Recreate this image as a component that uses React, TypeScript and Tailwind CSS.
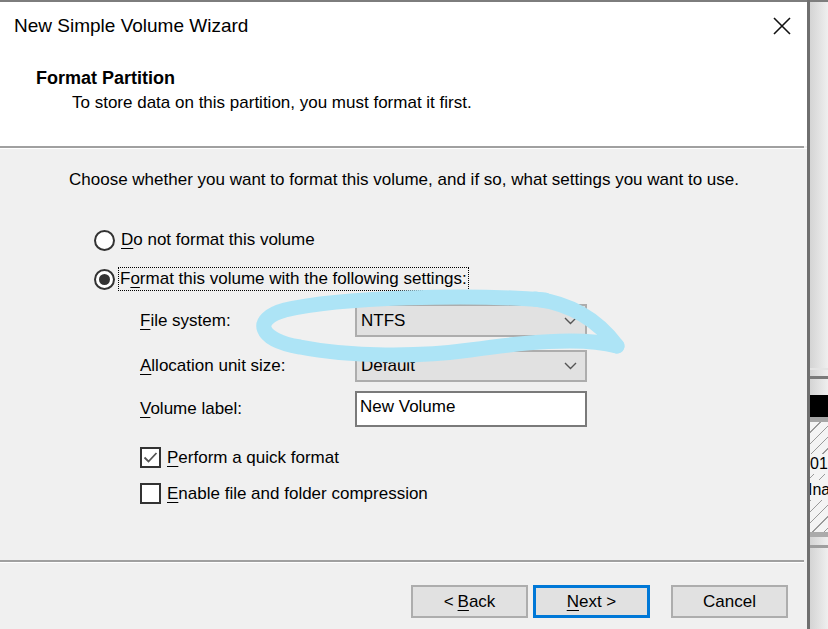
import React from 'react';

const font = { fontFamily: '"Liberation Sans", Arial, sans-serif' };

function Key({ children }: { children: string }) {
  return <span className="underline decoration-1 underline-offset-[3px]">{children}</span>;
}

function Radio({ checked }: { checked?: boolean }) {
  return (
    <span className="flex h-[21px] w-[21px] shrink-0 items-center justify-center rounded-full border-2 border-[#333] bg-white">
      {checked && <span className="h-[11px] w-[11px] rounded-full bg-[#333]" />}
    </span>
  );
}

function Checkbox({ checked }: { checked?: boolean }) {
  return (
    <span className="flex h-[21px] w-[21px] shrink-0 items-center justify-center border-2 border-[#333] bg-white">
      {checked && (
        <svg width="15" height="15" viewBox="0 0 15 15">
          <path d="M1.5 7.5 L5.5 11.5 L13.5 3" fill="none" stroke="#555" strokeWidth="1.8" />
        </svg>
      )}
    </span>
  );
}

function Combo({ value }: { value: string }) {
  return (
    <div className="flex h-full w-[232px] items-center justify-between border-2 border-[#adadad] bg-[#e1e1e1] pl-[4px] pr-[8px]">
      <span>{value}</span>
      <svg width="13" height="8" viewBox="0 0 13 8">
        <path d="M1 1 L6.5 6.5 L12 1" fill="none" stroke="#555" strokeWidth="1.4" />
      </svg>
    </div>
  );
}

function Button({ children, primary }: { children: React.ReactNode; primary?: boolean }) {
  return (
    <div
      className={
        primary
          ? 'flex h-[33px] w-[117px] items-center justify-center border-[3px] border-[#0078d7] bg-[#e1e1e1]'
          : 'flex h-[33px] w-[117px] items-center justify-center border-2 border-[#adadad] bg-[#e1e1e1]'
      }
    >
      {children}
    </div>
  );
}

function Dialog() {
  return (
    <div className="relative flex h-[629px] w-[807px] shrink-0 flex-col text-[17px] text-black">
      {/* header */}
      <div className="flex h-[146px] flex-col border-t-2 border-[#7d7d7d] bg-white">
        <div className="flex items-center justify-between pl-[14px] pr-[16px] pt-[12px]">
          <span className="text-[19px] leading-[24px]">New Simple Volume Wizard</span>
          <svg width="18" height="18" viewBox="0 0 18 18">
            <path d="M1 1 L17 17 M17 1 L1 17" stroke="#111" strokeWidth="1.6" />
          </svg>
        </div>
        <div className="mt-[30px] pl-[36px] text-[18px] font-bold leading-[20px]">Format Partition</div>
        <div className="mt-[5px] pl-[72px] leading-[20px]">To store data on this partition, you must format it first.</div>
      </div>
      <div className="h-[2px] w-[804px] bg-[#a0a0a0]" />
      <div className="h-px bg-white" />

      {/* body */}
      <div className="flex flex-1 flex-col bg-[#f0f0f0]">
        <div className="mt-[21px] pl-[69px] leading-[20px]">
          Choose whether you want to format this volume, and if so, what settings you want to use.
        </div>

        <div className="mt-[38px] flex h-[24px] items-center gap-[6px] pl-[94px]">
          <Radio />
          <span>
            <Key>D</Key>o not format this volume
          </span>
        </div>
        <div className="mt-[15px] flex h-[24px] items-center gap-[3px] pl-[94px]">
          <Radio checked />
          <span className="border border-dotted border-black px-[1px] leading-[22px]">
            F<Key>o</Key>rmat this volume with the following settings:
          </span>
        </div>

        <div className="mt-[13px] flex h-[33px] items-center pl-[140px]">
          <span className="w-[215px]">
            <Key>F</Key>ile system:
          </span>
          <Combo value="NTFS" />
        </div>
        <div className="mt-[13px] flex h-[32px] items-center pl-[140px]">
          <span className="w-[215px]">
            <Key>A</Key>llocation unit size:
          </span>
          <Combo value="Default" />
        </div>
        <div className="mt-[9px] flex h-[36px] items-center pl-[140px]">
          <span className="w-[215px]">
            <Key>V</Key>olume label:
          </span>
          <div className="flex h-full w-[232px] items-center border-2 border-[#7a7a7a] bg-white pb-[4px] pl-[3px]">
            New Volume
          </div>
        </div>

        <div className="mt-[20px] flex h-[21px] items-center gap-[6px] pl-[140px]">
          <Checkbox checked />
          <span>
            <Key>P</Key>erform a quick format
          </span>
        </div>
        <div className="mt-[15px] flex h-[21px] items-center gap-[6px] pl-[140px]">
          <Checkbox />
          <span>
            <Key>E</Key>nable file and folder compression
          </span>
        </div>

        <div className="mt-[56px] h-[2px] w-[804px] bg-[#a0a0a0]" />
        <div className="h-px w-[804px] bg-white" />

        <div className="mt-[22px] flex pl-[411px]">
          <Button>
            &lt; <span className="ml-[4px]"><Key>B</Key>ack</span>
          </Button>
          <div className="ml-[5px]">
            <Button primary>
              <Key>N</Key>ext &gt;
            </Button>
          </div>
          <div className="ml-[21px]">
            <Button>Cancel</Button>
          </div>
        </div>
      </div>

      {/* highlighter scribble drawn over the dialog */}
      <svg className="pointer-events-none absolute left-0 top-0" width="807" height="629" viewBox="0 0 807 629">
        <path
          d="M545 300 C470 294 340 297 285 310 C252 319 258 340 300 347 C350 357 420 357 470 350 C520 343 580 336 617 346"
          fill="none"
          stroke="#ade4f6"
          strokeWidth="15"
          strokeLinecap="round"
          strokeLinejoin="round"
        />
        <path
          d="M535 299 C575 304 600 323 617 346"
          fill="none"
          stroke="#ade4f6"
          strokeWidth="15"
          strokeLinecap="round"
        />
      </svg>
    </div>
  );
}

function BackWindow() {
  return (
    <div className="flex h-[629px] flex-1 flex-col overflow-hidden border-l-[3px] border-[#6f6f6f] bg-[linear-gradient(90deg,#d4d4d4,#efefef)]">
      <div className="h-[2px] bg-[#7d7d7d]" />
      <div className="h-[366px]" />
      <div className="h-[2px] bg-[#e4e4e4]" />
      <div className="h-[6px]" />
      <div className="h-[3px] bg-[#7a7a7a]" />
      <div className="h-[16px]" />
      <div className="h-[22px] bg-black" />
      <div className="h-[5px] bg-[#a6a6a6]" />
      <div className="relative h-[110px] bg-[repeating-linear-gradient(135deg,#f4f4f4_0px,#f4f4f4_7px,#9a9a9a_7px,#9a9a9a_8px)] text-[16px]">
        <div className="absolute left-0 top-[32px] bg-[#f4f4f4] leading-[20px]">01</div>
        <div className="absolute left-[-2px] top-[58px] bg-[#f4f4f4] leading-[20px]">Ina</div>
      </div>
      <div className="h-[5px] bg-[#ababab]" />
      <div className="h-[8px]" />
      <div className="h-[3px] bg-[#9e9e9e]" />
    </div>
  );
}

export default function App() {
  return (
    <div className="flex h-[629px] w-[828px] overflow-hidden bg-[#f0f0f0]" style={font}>
      <Dialog />
      <BackWindow />
    </div>
  );
}
